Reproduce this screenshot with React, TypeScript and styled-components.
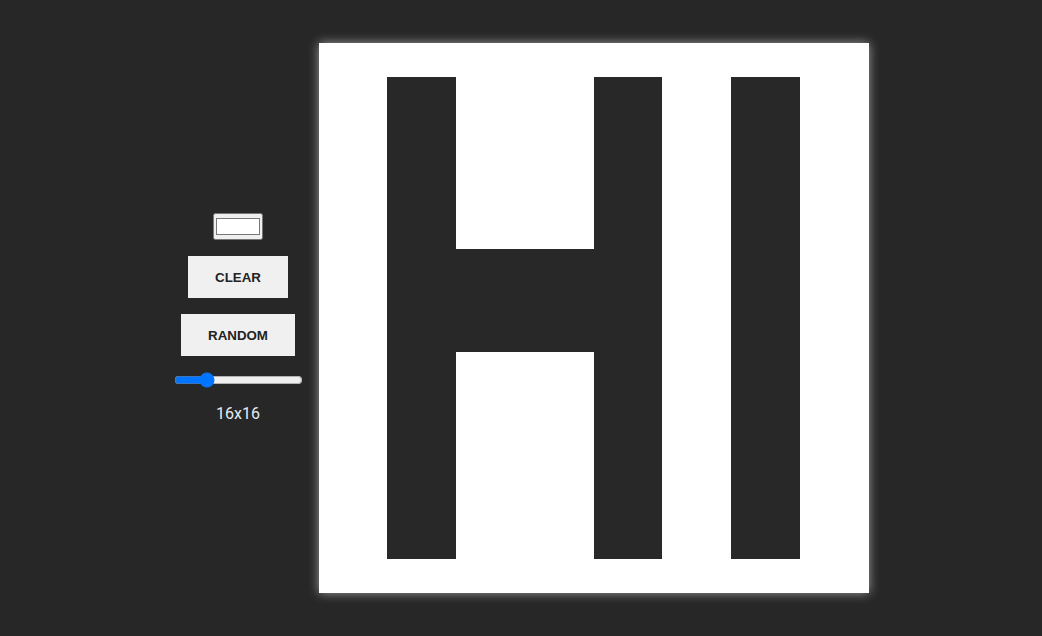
import React, { useState } from "react";
import styled, { createGlobalStyle } from "styled-components";

const GlobalStyle = createGlobalStyle`
  html, body { margin: 0; padding: 0; background: #272727; }
  body { font-family: Roboto, "Liberation Sans", sans-serif; }
`;

const Page = styled.div`
  height: 100vh;
  display: flex;
  justify-content: center;
  align-items: center;
  gap: 16px;
`;

const Controls = styled.div`
  width: 129px;
  display: flex;
  flex-direction: column;
  align-items: center;
`;

const ColorInput = styled.input`
  box-sizing: border-box;
  width: 50px;
  height: 27px;
  padding: 0;
  margin: 0 0 16px;
`;

const Button = styled.button<{ $w: number }>`
  width: ${(p) => p.$w}px;
  height: 42px;
  border: none;
  background: #f0f0f0;
  color: #222;
  font-family: "Liberation Sans", Arial, sans-serif;
  font-weight: bold;
  font-size: 13.333px;
  margin: 0 0 16px;
  padding: 0;
  cursor: pointer;
`;

const Slider = styled.input`
  width: 129px;
  margin: 0;
  accent-color: #0075ff;
`;

const SizeLabel = styled.div`
  margin-top: 16px;
  color: #e4ebf2;
  font-size: 16px;
  font-family: Roboto, sans-serif;
`;

const Board = styled.div<{ $n: number }>`
  width: 550px;
  height: 550px;
  display: grid;
  grid-template-columns: repeat(${(p) => p.$n}, 1fr);
  grid-template-rows: repeat(${(p) => p.$n}, 1fr);
  background: #fff;
  box-shadow: 0 0 10px rgba(255, 255, 255, 0.55);
`;

const Cell = styled.div<{ $on: boolean }>`
  background: ${(p) => (p.$on ? "#282828" : "#ffffff")};
`;

function initial(): boolean[] {
  const n = 16;
  const a: boolean[] = [];
  for (let r = 0; r < n; r++) {
    for (let c = 0; c < n; c++) {
      let on = false;
      if (r >= 1 && r <= 14) {
        if (c === 2 || c === 3 || c === 8 || c === 9 || c === 12 || c === 13) on = true;
        if (r >= 6 && r <= 8 && c >= 4 && c <= 7) on = true;
      }
      a.push(on);
    }
  }
  return a;
}

export default function App() {
  const [cells, setCells] = useState<boolean[]>(initial);
  const [size, setSize] = useState(16);
  return (
    <>
      <GlobalStyle />
      <Page>
        <Controls>
          <ColorInput type="color" defaultValue="#ffffff" />
          <Button $w={100} onClick={() => setCells(cells.map(() => false))}>CLEAR</Button>
          <Button $w={114} onClick={() => setCells(cells.map(() => Math.random() > 0.5))}>RANDOM</Button>
          <Slider
            type="range"
            min={2}
            max={64}
            value={size}
            onChange={(e) => setSize(Number(e.target.value))}
          />
          <SizeLabel>16x16</SizeLabel>
        </Controls>
        <Board $n={16}>
          {cells.map((on, i) => (
            <Cell key={i} $on={on} />
          ))}
        </Board>
      </Page>
    </>
  );
}
